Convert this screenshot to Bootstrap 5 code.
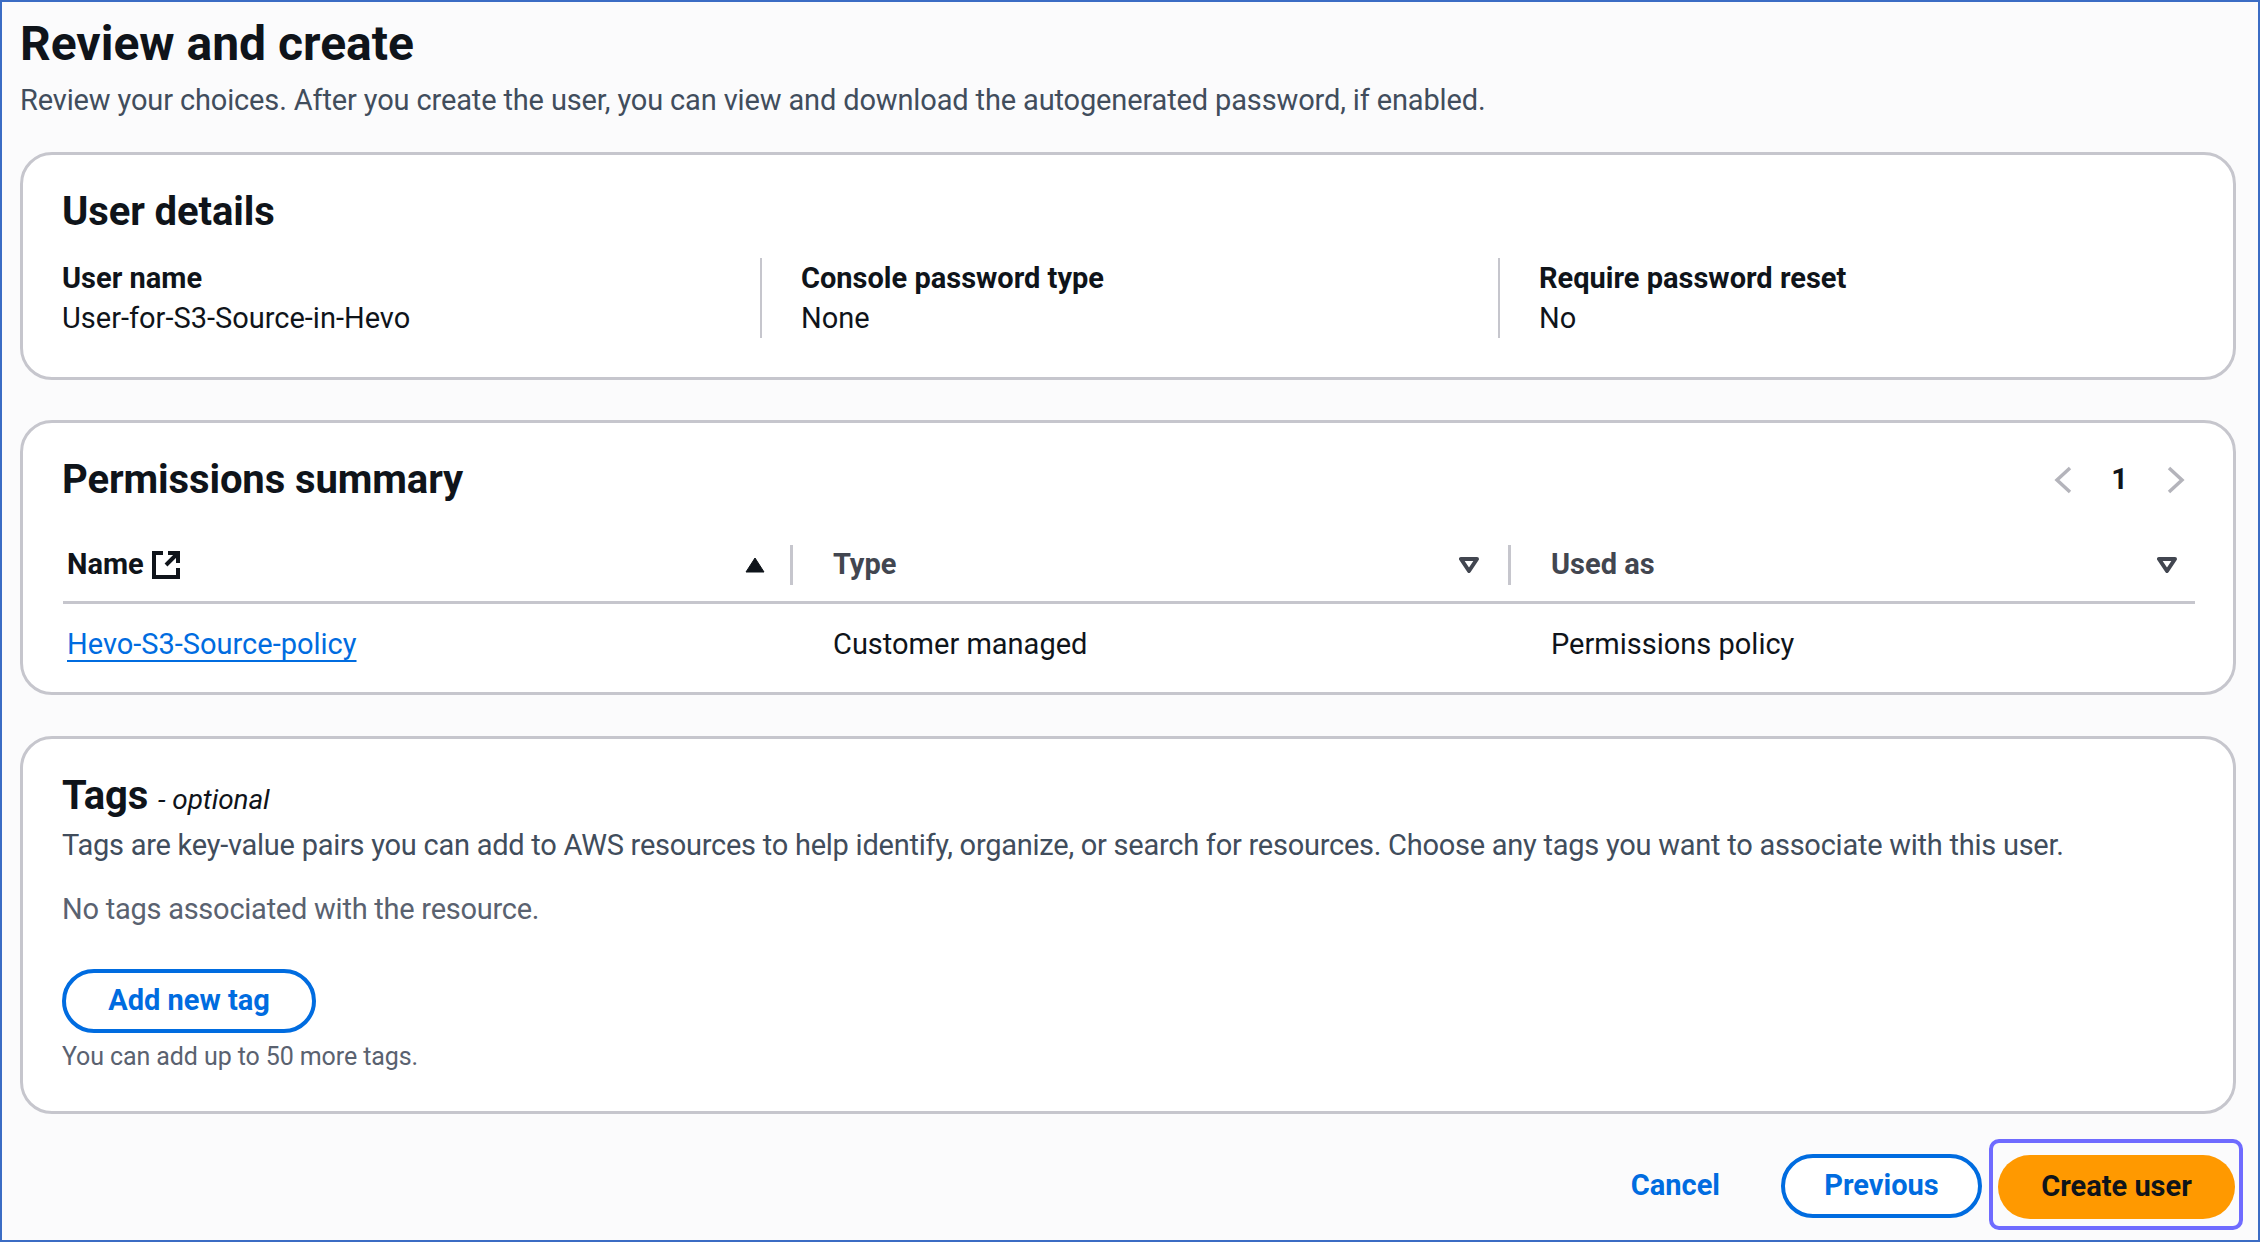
<!DOCTYPE html>
<html lang="en"><head><meta charset="utf-8"><title>Review and create</title>
<link href="https://cdn.jsdelivr.net/npm/bootstrap@5.3.0/dist/css/bootstrap.min.css" rel="stylesheet">
<style>
html,body{height:100%}
body{font-family:Roboto,"Noto Sans",sans-serif;font-size:29px;color:#0f141a;background:#fbfbfc;}
.frame{height:1242px;border:2px solid #3b6cc4;padding:16px 22px 10px 18px;overflow:hidden;display:flex;flex-direction:column}
.ptitle{font-size:48px;font-weight:700;line-height:52px;margin:0;color:#0f141a}
.psub{font-size:29px;line-height:40px;color:#414d5c;margin:10px 0 0;letter-spacing:-.14px}
.pcard{background:#fff;border:3px solid #c6c6cd;border-radius:32px;}
.c1{height:228px;margin-top:32px;padding:33px 39px 0}
.c2{height:276px;margin-top:40px;padding:0 39px 0 40px}
.c3{height:379px;margin-top:41px;padding:0 39px 0}
.chead{font-size:40px;font-weight:700;line-height:48px;margin:0;color:#0f141a;letter-spacing:-.1px}
.kvs{margin-top:22px;display:grid;grid-template-columns:698px 738px 738px}
.kv{height:80px;padding-left:39px;border-left:2px solid #c6c6cd}
.kv:first-child{padding-left:0;border-left:0}
.kk{font-weight:700;line-height:40px;color:#0f141a}
.vv{line-height:40px}
.pager{color:#0f141a;font-weight:700;gap:38px}
.ptbl{margin-top:42px;width:2132px}
.ptbl table{margin:0;table-layout:fixed;width:100%}
.ptbl th,.ptbl td{padding:0;background:transparent;font-size:29px}
.ptbl th{border-bottom:3px solid #c6c6cd;height:58px;vertical-align:top;font-weight:700;color:#424650}
.ptbl th:first-child{color:#0f141a}
.ptbl td{border:0;height:83px;vertical-align:middle;color:#0f141a;padding-left:40px}
.ptbl td:first-child{padding-left:4px}
.thin{height:40px;display:flex;align-items:center;justify-content:space-between;padding:0 29px 0 40px;border-right:3px solid #c6c6cd}
.ptbl th:first-child .thin{padding-left:4px;padding-right:25px}
.ptbl th:last-child .thin{border-right:0;padding-right:18px}
.plink{color:#006ce0;text-decoration:underline;text-underline-offset:6px;text-decoration-thickness:2px}
.opt{font-size:28px;font-weight:400;font-style:italic}
.desc{line-height:40px;color:#414d5c;margin:1px 0 0;letter-spacing:-.25px}
.notags{line-height:40px;color:#5a6270;margin:24px 0 0;letter-spacing:-.25px}
.pillb{border-radius:32px;font-size:29px;font-weight:700;height:64px;padding:0;display:inline-flex;align-items:center;justify-content:center}
.outl{border:4px solid #006ce0;color:#006ce0;background:#fff}
.outl:hover{border-color:#006ce0;color:#006ce0;background:#fff}
.addb{width:254px;margin-top:40px}
.note{font-size:25px;line-height:32px;color:#5a6270;margin-top:8px;letter-spacing:-.1px}
.foot{margin-top:25px;display:flex;justify-content:flex-end;align-items:center}
.cancel{color:#006ce0;font-weight:700;text-decoration:none;margin-right:61px;position:relative;top:1px}
.prev{width:201px;margin-right:7px;position:relative;top:1px}
.hilite{border:4px solid #6f6bff;border-radius:10px;padding:12px 4px 7px 5px;display:flex;margin-right:-7px}
.create{width:237px;background:#ff9900;color:#0f141a;border:0}
.create:hover{background:#ff9900;color:#0f141a}
</style></head>
<body>
<div class="frame">
  <h1 class="ptitle">Review and create</h1>
  <p class="psub">Review your choices. After you create the user, you can view and download the autogenerated password, if enabled.</p>

  <section class="pcard c1">
    <h2 class="chead">User details</h2>
    <div class="kvs">
      <div class="kv"><div class="kk">User name</div><div class="vv">User-for-S3-Source-in-Hevo</div></div>
      <div class="kv"><div class="kk">Console password type</div><div class="vv">None</div></div>
      <div class="kv"><div class="kk">Require password reset</div><div class="vv">No</div></div>
    </div>
  </section>

  <section class="pcard c2">
    <div class="d-flex justify-content-between align-items-center" style="height:48px;margin-top:33px">
      <h2 class="chead" style="margin-left:-1px">Permissions summary</h2>
      <div class="d-flex align-items-center pager pe-2">
        <svg width="20" height="28" viewBox="0 0 20 28"><path d="M17 2 4 14l13 12" fill="none" stroke="#b4b4bb" stroke-width="3.5"/></svg>
        <span>1</span>
        <svg width="20" height="28" viewBox="0 0 20 28"><path d="M3 2l13 12L3 26" fill="none" stroke="#b4b4bb" stroke-width="3.5"/></svg>
      </div>
    </div>
    <div class="ptbl" style="margin-top:41px">
      <table class="table">
        <colgroup><col style="width:730px"><col style="width:718px"><col></colgroup>
        <thead><tr>
          <th><div class="thin"><span class="d-inline-flex align-items-center gap-2">Name
            <svg width="28" height="28" viewBox="0 0 28 28"><path d="M11 2H2v24h24v-9M16 2h10v10M26 2 14 14" fill="none" stroke="#0f141a" stroke-width="4"/></svg></span>
            <svg width="20" height="16" viewBox="0 0 20 16"><path d="M10 1 19 15H1z" fill="#0f141a" stroke="#0f141a" stroke-linejoin="round"/></svg></div></th>
          <th><div class="thin"><span>Type</span>
            <svg width="20" height="16" viewBox="0 0 20 16"><path d="M2 2h16l-8 12z" fill="none" stroke="#424650" stroke-width="4" stroke-linejoin="round"/></svg></div></th>
          <th><div class="thin"><span>Used as</span>
            <svg width="20" height="16" viewBox="0 0 20 16"><path d="M2 2h16l-8 12z" fill="none" stroke="#424650" stroke-width="4" stroke-linejoin="round"/></svg></div></th>
        </tr></thead>
        <tbody><tr>
          <td><a class="plink" href="#">Hevo-S3-Source-policy</a></td>
          <td>Customer managed</td>
          <td>Permissions policy</td>
        </tr></tbody>
      </table>
    </div>
  </section>

  <section class="pcard c3">
    <h2 class="chead" style="margin-top:33px">Tags <span class="opt">- optional</span></h2>
    <p class="desc">Tags are key-value pairs you can add to AWS resources to help identify, organize, or search for resources. Choose any tags you want to associate with this user.</p>
    <p class="notags">No tags associated with the resource.</p>
    <button type="button" class="btn pillb outl addb">Add new tag</button>
    <div class="note">You can add up to 50 more tags.</div>
  </section>

  <div class="foot">
    <a class="cancel" href="#">Cancel</a>
    <button type="button" class="btn pillb outl prev">Previous</button>
    <div class="hilite"><button type="button" class="btn pillb create">Create user</button></div>
  </div>
</div>
</body></html>
